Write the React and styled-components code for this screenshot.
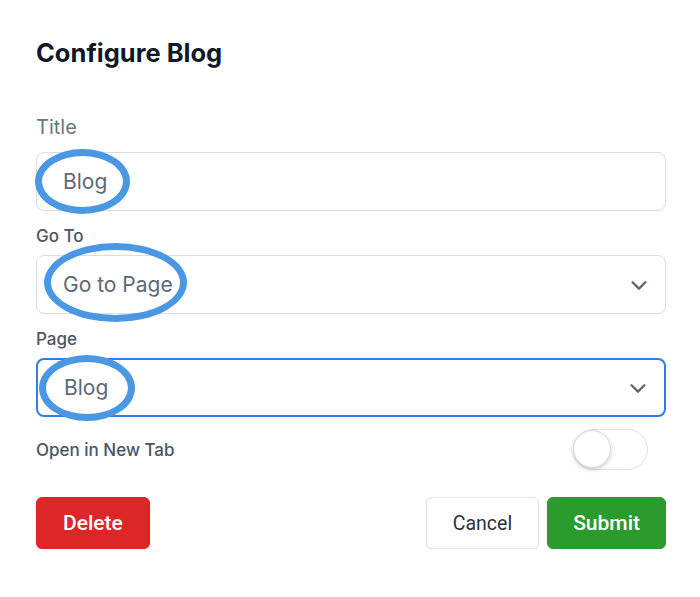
import React from "react";
import styled, { createGlobalStyle } from "styled-components";

const GlobalStyle = createGlobalStyle`
  body {
    margin: 0;
    background: #ffffff;
    font-family: "Inter", "Noto Sans", sans-serif;
  }
`;

export default function App() {
  return (
    <>
      <GlobalStyle />
      <Page>
        <Heading>Configure Blog</Heading>

        <BigLabel>Title</BigLabel>
        <Field $first>
          <FieldText>Blog</FieldText>
          <Ring $left={-2} $top={-4} $w={95} $h={65} />
        </Field>

        <Label>Go To</Label>
        <Field>
          <FieldText>Go to Page</FieldText>
          <Chevron />
          <Ring $left={7} $top={-13} $w={143} $h={79} />
        </Field>

        <Label>Page</Label>
        <Field $focused>
          <FieldText>Blog</FieldText>
          <Chevron />
          <Ring $left={1} $top={-5} $w={96} $h={66} />
        </Field>

        <ToggleRow>
          <Label as="span">Open in New Tab</Label>
          <Toggle>
            <Knob />
          </Toggle>
        </ToggleRow>

        <Actions>
          <Button $variant="danger">Delete</Button>
          <Group>
            <Button $variant="plain">Cancel</Button>
            <Button $variant="primary">Submit</Button>
          </Group>
        </Actions>
      </Page>
    </>
  );
}

function Chevron() {
  return (
    <ChevronIcon viewBox="0 0 24 24" fill="none">
      <path d="M5 9l7 7 7-7" stroke="#5f6671" strokeWidth="2.6" strokeLinecap="round" strokeLinejoin="round" />
    </ChevronIcon>
  );
}

const Page = styled.div`
  display: flex;
  flex-direction: column;
  padding: 36px 34px 0 36px;
`;

const Heading = styled.h1`
  margin: 0;
  font-size: 25.5px;
  line-height: 34px;
  font-weight: 700;
  color: #111827;
`;

const BigLabel = styled.div`
  margin-top: 45px;
  font-size: 20px;
  line-height: 24px;
  color: #6b7682;
`;

const Label = styled.div`
  margin-top: 15px;
  font-size: 17px;
  line-height: 20px;
  font-weight: 500;
  color: #4b5563;
`;

const Field = styled.div`
  position: relative;
  display: flex;
  align-items: center;
  margin-top: ${({ $first }) => ($first ? "13px" : "9px")};
  height: 59px;
  box-sizing: border-box;
  padding: 0 26px;
  border: ${({ $focused }) => ($focused ? "2px solid #2f7de8" : "1px solid #d9dde3")};
  border-radius: 8px;
  background: #fff;
`;

const FieldText = styled.span`
  flex: 1;
  font-size: 21px;
  color: #5d6975;
`;

const ChevronIcon = styled.svg`
  width: 22px;
  height: 22px;
  margin-right: -11px;
`;

const Ring = styled.div`
  position: absolute;
  left: ${({ $left }) => $left}px;
  top: ${({ $top }) => $top}px;
  width: ${({ $w }) => $w}px;
  height: ${({ $h }) => $h}px;
  box-sizing: border-box;
  border: 7px solid #4a98e4;
  border-radius: 50%;
  pointer-events: none;
`;

const ToggleRow = styled.div`
  display: flex;
  align-items: center;
  justify-content: space-between;
  margin-top: 12px;
  padding-right: 18px;

  & > span {
    margin-top: 0;
  }
`;

const Toggle = styled.div`
  position: relative;
  width: 75px;
  height: 41px;
  box-sizing: border-box;
  border: 1.5px solid #dfe2e7;
  border-radius: 21px;
  background: #fff;
`;

const Knob = styled.div`
  position: absolute;
  left: -1px;
  top: 0px;
  width: 38px;
  height: 38px;
  border-radius: 50%;
  background: #fff;
  border: 1px solid #d4d7dc;
  box-shadow: 0 2px 4px rgba(0, 0, 0, 0.18);
  box-sizing: border-box;
`;

const Actions = styled.div`
  display: flex;
  justify-content: space-between;
  align-items: center;
  margin-top: 27px;
`;

const Group = styled.div`
  display: flex;
  gap: 8px;
`;

const Button = styled.button`
  height: 52px;
  padding: 0 ${({ $variant }) => ($variant === "primary" ? "25px" : "26px")};
  border-radius: 6px;
  font-family: "Roboto", "Liberation Sans", sans-serif;
  font-size: ${({ $variant }) => ($variant === "plain" ? "19.5px" : "21px")};
  font-weight: ${({ $variant }) => ($variant === "plain" ? 400 : 500)};
  cursor: pointer;
  border: 1px solid
    ${({ $variant }) =>
      $variant === "danger" ? "#d92528" : $variant === "primary" ? "#2a9a2c" : "#e1e4e8"};
  background: ${({ $variant }) =>
    $variant === "danger" ? "#dc2627" : $variant === "primary" ? "#2b9b2d" : "#ffffff"};
  color: ${({ $variant }) => ($variant === "plain" ? "#2a3140" : "#ffffff")};
  box-shadow: 0 1px 2px rgba(0, 0, 0, 0.08);
`;
